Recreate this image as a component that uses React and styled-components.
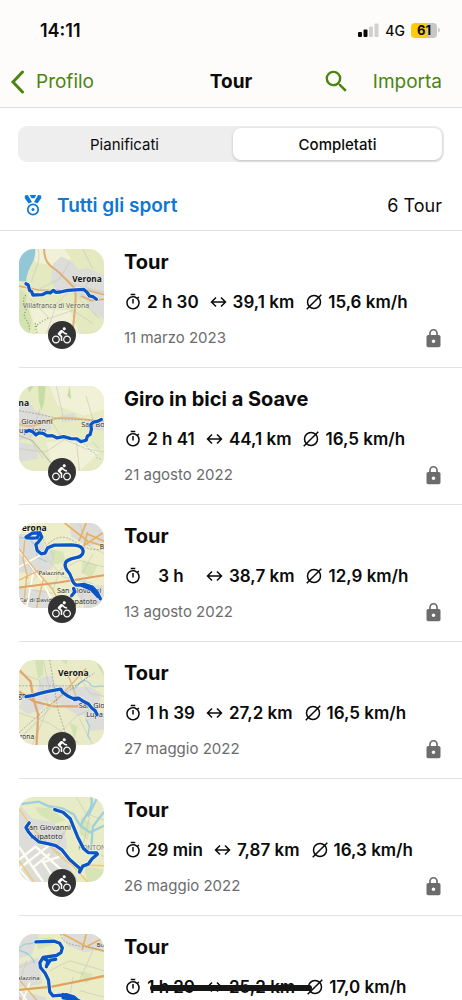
import React, { useState } from "react";
import styled, { createGlobalStyle, css } from "styled-components";
import { MdLock, MdSearch, MdDirectionsBike, MdOutlineTimer } from "react-icons/md";

const GlobalStyle = createGlobalStyle`
  *, *::before, *::after { box-sizing: border-box; }
  body {
    margin: 0;
    background: #fff;
    color: #0b0b0b;
    font-family: Inter, "Liberation Sans", sans-serif;
  }
  button { font: inherit; color: inherit; background: none; border: 0; padding: 0; cursor: pointer; }
  svg { display: block; flex: none; }
`;

const Screen = styled.div`
  display: flex;
  flex-direction: column;
  height: 100vh;
  overflow: hidden;
`;

const Header = styled.header`
  flex: none;
  background: #fdfcfb;
  border-bottom: 1px solid #dedede;
`;

const StatusBar = styled.div`
  display: flex;
  align-items: center;
  justify-content: space-between;
  height: 56px;
  padding: 4px 25px 0 40px;
`;

const Clock = styled.time`
  font-size: 18px;
  font-weight: 600;
`;

const StatusIcons = styled.div`
  display: flex;
  align-items: center;
  gap: 6px;
  font-size: 14px;
  font-weight: 500;
`;

const Battery = styled.span`
  position: relative;
  display: flex;
  align-items: center;
  justify-content: center;
  width: 26px;
  height: 15px;
  border-radius: 4px;
  background: linear-gradient(to right, #fccc0c 61%, #c8c7c5 61%);
  font-size: 13px;
  font-weight: 700;

  &::after {
    content: "";
    position: absolute;
    right: -3px;
    width: 2px;
    height: 4px;
    border-radius: 0 2px 2px 0;
    background: #c8c7c5;
  }
`;

const NavBar = styled.nav`
  display: grid;
  grid-template-columns: 1fr auto 1fr;
  align-items: center;
  height: 51px;
  padding: 0 20px;
  font-size: 19px;
`;

const BackLink = styled.a`
  display: flex;
  align-items: center;
  gap: 11px;
  margin-left: -10px;
  color: #4b850f;
  text-decoration: none;
`;

const NavTitle = styled.h1`
  margin: 0;
  font-size: 19px;
  font-weight: 700;
`;

const NavActions = styled.div`
  display: flex;
  align-items: center;
  justify-content: flex-end;
  gap: 22px;
  color: #4b850f;
`;

const Tabs = styled.div`
  flex: none;
  display: grid;
  grid-template-columns: 1fr 1fr;
  gap: 4px;
  margin: 18px 18px;
  height: 36px;
  padding: 2px;
  border-radius: 9px;
  background: #eeeeef;
`;

const Tab = styled.button`
  && {
    border-radius: 8px;
    font-size: 15px;
    ${(p) =>
      p.$active &&
      css`
        background: #fff;
        font-weight: 500;
        box-shadow: 0 1px 3px rgba(0, 0, 0, 0.2);
      `}
  }
`;

const FilterBar = styled.div`
  flex: none;
  display: flex;
  align-items: center;
  justify-content: space-between;
  height: 51px;
  padding: 0 20px 0 24px;
  border-bottom: 1px solid #e2e2e2;
  font-size: 18px;
`;

const FilterButton = styled.button`
  && {
    display: flex;
    align-items: center;
    gap: 15px;
    color: #0e78d3;
    font-size: 19px;
    font-weight: 600;
  }
`;

const TourList = styled.ul`
  flex: 1;
  min-height: 0;
  margin: 0;
  padding: 0 0 0 19px;
  list-style: none;
  overflow: auto;
  scrollbar-width: none;
`;

const TourItem = styled.li`
  border-bottom: 1px solid #e2e2e2;
`;

const TourLink = styled.a`
  display: flex;
  gap: 20px;
  height: 136px;
  padding: 18px 18px 0 0;
  color: inherit;
  text-decoration: none;
`;

const Thumb = styled.div`
  position: relative;
  flex: none;
  width: 85px;
  height: 85px;
`;

const MapSvg = styled.svg`
  width: 100%;
  height: 100%;
  border-radius: 15px;
  font-family: "Open Sans", "Noto Sans", sans-serif;
`;

const SportBadge = styled.span`
  position: absolute;
  left: 50%;
  bottom: -15px;
  display: grid;
  place-items: center;
  width: 28px;
  height: 28px;
  margin-left: -14px;
  border-radius: 50%;
  background: #333;
  color: #fff;
`;

const TourBody = styled.div`
  flex: 1;
  min-width: 0;
`;

const TourTitle = styled.h2`
  margin: 0;
  font-size: 20px;
  line-height: 26px;
  font-weight: 700;
`;

const Stats = styled.div`
  position: relative;
  display: flex;
  width: max-content;
  gap: 11px;
  margin-top: 15px;
  font-size: 17px;
  line-height: 24px;
  font-weight: 600;
  white-space: nowrap;
`;

const Stat = styled.span`
  display: flex;
  align-items: center;
  gap: 5px;
`;

const Duration = styled.span`
  min-width: 48px;
  text-align: center;
`;

const Strike = styled.span`
  position: absolute;
  left: 26px;
  right: 94px;
  top: 10px;
  height: 6px;
  border-radius: 3px;
  background: #161616;
`;

const Meta = styled.div`
  display: flex;
  align-items: center;
  justify-content: space-between;
  margin-top: 13px;
  color: #6c6c6c;
  font-size: 15px;
  line-height: 22px;
`;

/* Map drawing parts */
const Land = styled.rect`
  fill: ${(p) => p.$fill || "#e6ebc3"};
`;
const Town = styled.path`
  fill: #dcdcd8;
`;
const Wood = styled.path`
  fill: #c5dca5;
`;
const Pale = styled.path`
  fill: #f1f1d7;
`;
const Water = styled.path`
  fill: none;
  stroke: #a0cfdc;
  stroke-width: ${(p) => p.$w || 5};
`;
const Lane = styled.path`
  fill: none;
  stroke: #c9c9b8;
  stroke-width: ${(p) => p.$w || 2};
`;
const Street = styled.path`
  fill: none;
  stroke: #fffdf2;
  stroke-width: ${(p) => p.$w || 5};
`;
const Road = styled.path`
  fill: none;
  stroke: ${(p) => p.$c || "#e5b877"};
  stroke-width: ${(p) => p.$w || 5};
`;
const Rail = styled.path`
  fill: none;
  stroke: #8f8f8b;
  stroke-width: 2;
  stroke-dasharray: 6 4;
`;
const Halo = styled.path`
  fill: none;
  stroke: #fff;
  stroke-opacity: 0.7;
  stroke-width: 14;
  stroke-linecap: round;
  stroke-linejoin: round;
`;
const Track = styled.path`
  fill: none;
  stroke: #0b55c4;
  stroke-width: 10;
  stroke-linecap: round;
  stroke-linejoin: round;
`;
const Label = styled.text`
  fill: ${(p) => p.$c || "#1c1c1c"};
  font-size: ${(p) => p.$s || 24}px;
  font-weight: ${(p) => (p.$bold ? 700 : 500)};
  stroke: #fff;
  stroke-width: 3px;
  stroke-opacity: 0.4;
  paint-order: stroke;
`;

const Route = ({ d }) => (
  <>
    <Halo d={d} />
    <Track d={d} />
  </>
);

const MapVerona = () => (
  <MapSvg viewBox="27 30 257 257" aria-hidden="true">
    <Land x="27" y="30" width="257" height="257" $fill="#e5e9c0" />
    <Pale d="M75 30h90l20 30-60 20-50-10zM60 210l120 5 30 72H80z" />
    <path d="M27 30h49c2 20-5 38-14 52-8 15-12 30-14 48l-21-4z" fill="#92c7d8" />
    <Town d="M130 75l25-22 32 15 20 25 30-5 47 22v130l-30-10-25-45-40-20-45-5-20-30z" />
    <Wood d="M30 150l18 15 4 40 14 40-8 42H27v-60z" opacity="0.5" />
    <Lane d="M85 30c10 40-15 70-20 100M110 287l30-90 60-60M60 180l60 60 70-25 60 40M220 30l30 60M150 110l50 30 84 20M180 70l-30 50-60 30M240 120l-30 60 60 60" />
    <Road d="M103 30c0 35 14 50 34 62 20 14 32 32 54 52 14 12 5 55-2 143" $c="#e1ad72" $w={6} />
    <Road d="M27 142l60 12 70 2 60-6 67 18M215 172l30 14 39-4" $c="#e1ad72" />
    <path d="M48 170c-20 20 8 34-2 50-12 22 18 26 12 60M75 255c12 10-4 18 10 30M75 265l20-15 22-12" fill="none" stroke="#79a457" strokeWidth="4" strokeDasharray="3 6" />
    <Label x="188" y="131" $s={25} $bold $c="#111">Verona</Label>
    <Label x="38" y="207" $s={21} $c="#555">Villafranca di Verona</Label>
    <Route d="M48 135l7 4 4 16 6 4 4 10 28-1 15-7 9 2 10-8 7 6 14-1 22-5 48-3 10 8 8 12 12 3 9 7" />
  </MapSvg>
);

const MapSoave = () => (
  <MapSvg viewBox="27 30 257 257" aria-hidden="true">
    <Land x="27" y="30" width="257" height="257" />
    <Pale d="M120 30h164v70l-60 20-80-30zM110 200l90-10 70 40-60 57h-80z" />
    <Wood d="M85 30h22l-4 50-8 25-8-30zM180 30l5 40-12-10zM52 30h20l-14 20z" />
    <Town d="M27 75l30 5 20 25 40 15 8 40-30 15-68 20zM27 200l50 10 10 40-60 10zM150 120l45-8 10 22-45 5zM225 130l59 10v25l-50-4z" />
    <Lane d="M90 100l-30 90 40 60M120 130l40 60 70 30 54 10M140 30l20 90M27 220l80 10 60-40M200 190l10 97M230 60l20 70" />
    <Road d="M27 180l40 15 50 60 30 32" $c="#c3bfb5" $w={4} />
    <Road d="M27 145c50 20 70-15 130-19 40-1 70 8 127 10" $c="#e6bd82" $w={6} />
    <Rail d="M27 105l60 10 60 14 137 6" />
    <Water d="M222 205l12 8 6 12 18 8 4 14 18 6M250 200l20 20" $w={3} strokeDasharray="6 4" />
    <Label x="25" y="91" $s={26} $bold $c="#222">na</Label>
    <Label x="34" y="145" $s={23}>Giovanni</Label>
    <Label x="27" y="172" $s={22}>upatoto</Label>
    <Label x="215" y="155" $s={22}>San Bo</Label>
    <Route d="M48 168l10-4 10 4 10 10 8-6 14 1 12 8 16-1 14 7 20-4 22 6 18 1 12 8 16-4 4-13 8-4 4-16-2-14 8-8 12-2 12-6" />
  </MapSvg>
);

const MapPalazzina = () => (
  <MapSvg viewBox="27 27 257 257" aria-hidden="true">
    <Land x="27" y="27" width="257" height="257" $fill="#edeec9" />
    <Town d="M27 60h60l20 40 30 15-10 50-50 20-50-10zM180 27h104v60l-50 10-50-30zM27 225l80 5 30 54H27zM190 215h94v69h-60z" />
    <Wood d="M120 105l40 10 10 30-40 8zM220 140l45 15-20 40-30-20z" opacity="0.5" />
    <Lane d="M100 120l60 70 90 20M40 130l40 60-50 40M130 230l20-60 60-30 74 20M70 230l60 10M210 30l20 60 54 30M230 190l-20 90M250 120l-30 60" />
    <Water d="M27 70l30 5 20 20 5 35 30 15" $w={4} />
    <Street d="M27 110l70 90 40 84M27 160l90-50M50 284l20-110" />
    <Road d="M27 105l50 65 50 55 30 59M45 75l-6 60 15 60M50 190l-10 94M27 200l60-30M100 200l-20 84" $w={4} />
    <Road d="M165 27l70 55 49 15M230 27l-22 55M284 55l-60 40 10-40M284 82l-50-22" $c="#e7b05e" />
    <Road d="M27 222l120-15 137-22" $c="#dfa06a" $w={6} />
    <Rail d="M80 40l30 55c70-70 90 30 174 10" />
    <Label x="35" y="50" $s={26} $bold $c="#111">erona</Label>
    <Label x="271" y="107" $s={20}>Bu</Label>
    <Label x="86" y="185" $s={18}>Palazzina</Label>
    <Label x="142" y="240" $s={22}>San Giovanni</Label>
    <Label x="29" y="267" $s={18}>Ca' di David</Label>
    <Label x="170" y="273" $s={22}>Lupatoto</Label>
    <Route d="M48 70l18-12 24-2-8 16-14 1-18-1M90 56l6 14-10 14-8 8 4 18 12 10 12-2 8-16 20-8 50-1c26 1 38 8 37 22-2 18-24 15-40 22-18 6-18 20-8 34 20 20 8 34 28 44l24-2 24 8 14 15 10 20M192 225l4 10-10 12M215 215l30 12 20 22" />
  </MapSvg>
);

const MapLugagnano = () => (
  <MapSvg viewBox="27 30 257 257" aria-hidden="true">
    <Land x="27" y="30" width="257" height="257" $fill="#e9ebc8" />
    <Town d="M90 85l35-10 10 30 45 10 60-5 35 20-8 50-60 20-60-40-70-10zM40 140l50 5 15 30-50 20-28-20zM215 180l69 10v50l-40 5z" />
    <Wood d="M75 30h25v45l-15 12zM155 30h20l-5 15zM260 40l24 10v30zM180 220l25 10-10 40z" opacity="0.6" />
    <Lane d="M27 70l60 20 30 80-50 117M100 30l20 90M27 190l90 30 90 60M200 60l40 70 44 10M140 260l60-60 40-20M250 287l-40-80" />
    <Water d="M180 110c20 30 30-40 60-10 10 20 30 5 44 10M230 210l10 20-5 30 8 10" $w={4} />
    <Road d="M27 60l35 35 8 50 15 50-5 92M27 125l45 30 60 15h75" $c="#dfa674" $w={7} />
    <Road d="M130 160l50-50 50-55M200 140l-30-80" $w={4} />
    <Rail d="M27 108h170l60-40M120 30l25 150 25 80M27 250l100-90 110-80" />
    <Lane d="M27 270l110-110" $w={3} />
    <Label x="145" y="79" $s={26} $bold $c="#111">Verona</Label>
    <Label x="24" y="145" $s={22}>gn</Label>
    <Label x="208" y="175" $s={22}>San Gio</Label>
    <Label x="230" y="203" $s={22}>Lupa</Label>
    <Label x="29" y="270" $s={20}>rona</Label>
    <Route d="M48 141l22-4 20-6 25-6 38-7 6 10 14 10 16 8 18-1 14 10 16 8 10 12 10 8 6 12M195 150l12-3" />
  </MapSvg>
);

const MapPontoncello = () => (
  <MapSvg viewBox="27 30 257 257" aria-hidden="true">
    <Land x="27" y="30" width="257" height="257" $fill="#e8ecc6" />
    <Town d="M27 50l40 45 60 10 40 30 5 50-20 10 50 80v12H27z" />
    <Wood d="M75 60l50 5 40 35-30 10-50-30zM215 90l30 20-10 50-25-20zM225 240l59 10v37h-50z" opacity="0.5" />
    <Lane d="M180 110l-50 90M200 30l30 50 54 20M150 150l30-30M240 90l-20 90 64 30" />
    <Water d="M27 52l60-8 30 14 40 6 35 18 20 35 30 20 42-20M245 30c10 40-20 50-30 85M265 30l-30 60M284 75l-34 45-4 60" $w={7} />
    <Street d="M27 220l50-40 100 90M60 287l-33-40 90-70M100 287l-30-45 50-40M27 180l60 90M140 287l-40-60 60-20" $w={7} />
    <Road d="M27 65l45 65 80 80 40 30 42 47M27 222l45 65M215 235l69 3" $c="#efcb80" $w={5} />
    <Lane d="M65 120l70 70 60 45" $w={3} />
    <Label x="44" y="129" $s={23}>San Giovanni</Label>
    <Label x="62" y="156" $s={23}>Lupatoto</Label>
    <Label x="206" y="189" $s={20} $c="#6a6a6a">PONTON</Label>
    <Route d="M58 108l-10 14 8 14 10 12 22 18 26 5 24 6 18 12 24 30 32 28-2 10 10-18 16-6 12-16 16-14-2-4-26-1-14-12-18-36-22-54-22-20-25-8" />
  </MapSvg>
);

const MapRiver = () => (
  <MapSvg viewBox="57 69 257 257" aria-hidden="true">
    <Land x="57" y="69" width="257" height="257" $fill="#e9ecc5" />
    <Town d="M57 69h60l-20 60-40 15zM185 69h129v45l-60 10-50-20zM57 160l60-20 10 80-70 10zM57 240l80 20 30 66H57z" />
    <Wood d="M105 80h50l10 20-50 15zM240 180l40 10-20 30z" opacity="0.5" />
    <Water d="M57 115c15-25 30-10 50-22M57 118c20 5 40 18 48 40" $w={4} />
    <Lane d="M150 180l60-30 104 30M220 200l-20 126M190 170l60 20M57 170l50-20M80 150l-20 60M240 240l74 20M280 120l-40 90" />
    <Street d="M57 235l60 91M90 215l-30 80" />
    <Road d="M57 260l60 66M60 210l60 70 30 46M57 300l50-30" $w={4} />
    <Road d="M190 69l70 38 54 14M260 69l-12 48M314 80l-50 25" $c="#e7b05e" />
    <Road d="M57 238l100-10 90-18 67-14" $c="#dfa35e" $w={7} />
    <Rail d="M183 69c10 45 60 28 131 51" />
    <Label x="292" y="108" $s={18}>Bu</Label>
    <Label x="52" y="208" $s={18}>alazzina</Label>
    <Route d="M108 93l56-2 16 6 8 14-4 14-14 9-40 6-10 16 2 14 14 18 10 20 4 36 10 12 40-4 24 8 18 16M130 142l14 8-4 18M140 166l12-18 16-2M190 262l30 4 20 10M190 252l50 20" />
  </MapSvg>
);

const MedalIcon = () => (
  <svg width="18" height="22" viewBox="0 0 18 22" aria-hidden="true">
    <path d="M0.800 1.500L3.800 1 8 8 4.600 9.600 0.800 4.200zM17.200 1.500L14.200 1 10 8 13.400 9.600 17.200 4.200z" fill="currentColor" />
    <path d="M5.800 1h6.400l-1.600 3.200H7.400z" fill="currentColor" />
    <circle cx="9" cy="15.500" r="5.200" fill="none" stroke="currentColor" strokeWidth="1.700" />
    <circle cx="9" cy="15.500" r="1.500" fill="currentColor" />
  </svg>
);

const BackIcon = () => (
  <svg width="15" height="24" viewBox="0 0 15 24" fill="none" stroke="currentColor" strokeWidth="3" strokeLinecap="round" aria-hidden="true">
    <path d="M12.500 2L3 12l9.500 10" strokeLinejoin="miter" />
  </svg>
);

const SignalIcon = () => (
  <svg width="21" height="14" viewBox="0 0 21 14" aria-hidden="true">
    <rect x="0" y="9" width="4" height="5" rx="1" fill="#0b0b0b" />
    <rect x="5.500" y="6.500" width="4" height="7.500" rx="1" fill="#0b0b0b" />
    <rect x="11" y="3.500" width="4" height="10.500" rx="1" fill="#d2d1d0" />
    <rect x="16.500" y="0.500" width="4" height="13.500" rx="1" fill="#d2d1d0" />
  </svg>
);

const DistanceIcon = () => (
  <svg width="18" height="18" viewBox="0 0 18 18" fill="none" stroke="currentColor" strokeWidth="1.500" aria-hidden="true">
    <path d="M1.500 9h14M6 4.500L1.500 9 6 13.500M11 4.500L15.500 9 11 13.500" />
  </svg>
);

const AverageIcon = () => (
  <svg width="18" height="18" viewBox="0 0 18 18" fill="none" stroke="currentColor" strokeWidth="1.500" aria-hidden="true">
    <circle cx="9" cy="9" r="6.500" />
    <path d="M1.700 16.300L16.300 1.700" />
  </svg>
);

const tours = [
  { title: "Tour", time: "2 h 30", km: "39,1 km", speed: "15,6 km/h", date: "11 marzo 2023", Map: MapVerona },
  { title: "Giro in bici a Soave", time: "2 h 41", km: "44,1 km", speed: "16,5 km/h", date: "21 agosto 2022", Map: MapSoave },
  { title: "Tour", time: "3 h", km: "38,7 km", speed: "12,9 km/h", date: "13 agosto 2022", Map: MapPalazzina },
  { title: "Tour", time: "1 h 39", km: "27,2 km", speed: "16,5 km/h", date: "27 maggio 2022", Map: MapLugagnano },
  { title: "Tour", time: "29 min", km: "7,87 km", speed: "16,3 km/h", date: "26 maggio 2022", Map: MapPontoncello },
  { title: "Tour", time: "1 h 29", km: "25,2 km", speed: "17,0 km/h", Map: MapRiver, struck: true },
];

const TourRow = ({ title, time, km, speed, date, Map, struck }) => (
  <TourItem>
    <TourLink href="#tour">
      <Thumb>
        <Map />
        <SportBadge>
          <MdDirectionsBike size={19} />
        </SportBadge>
      </Thumb>
      <TourBody>
        <TourTitle>{title}</TourTitle>
        <Stats>
          <Stat>
            <MdOutlineTimer size={18} />
            <Duration>{time}</Duration>
          </Stat>
          <Stat>
            <DistanceIcon />
            {km}
          </Stat>
          <Stat>
            <AverageIcon />
            {speed}
          </Stat>
          {struck && <Strike />}
        </Stats>
        {date && (
          <Meta>
            <time>{date}</time>
            <MdLock size={21} />
          </Meta>
        )}
      </TourBody>
    </TourLink>
  </TourItem>
);

export default function App() {
  const [tab, setTab] = useState("Completati");
  return (
    <Screen>
      <GlobalStyle />
      <Header>
        <StatusBar>
          <Clock>14:11</Clock>
          <StatusIcons>
            <SignalIcon />
            <span>4G</span>
            <Battery>61</Battery>
          </StatusIcons>
        </StatusBar>
        <NavBar>
          <BackLink href="#profilo">
            <BackIcon />
            Profilo
          </BackLink>
          <NavTitle>Tour</NavTitle>
          <NavActions>
            <button type="button" aria-label="Cerca">
              <MdSearch size={29} />
            </button>
            <button type="button">Importa</button>
          </NavActions>
        </NavBar>
      </Header>
      <Tabs role="tablist">
        {["Pianificati", "Completati"].map((name) => (
          <Tab key={name} type="button" role="tab" aria-selected={tab === name} $active={tab === name} onClick={() => setTab(name)}>
            {name}
          </Tab>
        ))}
      </Tabs>
      <FilterBar>
        <FilterButton type="button">
          <MedalIcon />
          Tutti gli sport
        </FilterButton>
        <span>6 Tour</span>
      </FilterBar>
      <TourList>
        {tours.map((t, i) => (
          <TourRow key={i} {...t} />
        ))}
      </TourList>
    </Screen>
  );
}
